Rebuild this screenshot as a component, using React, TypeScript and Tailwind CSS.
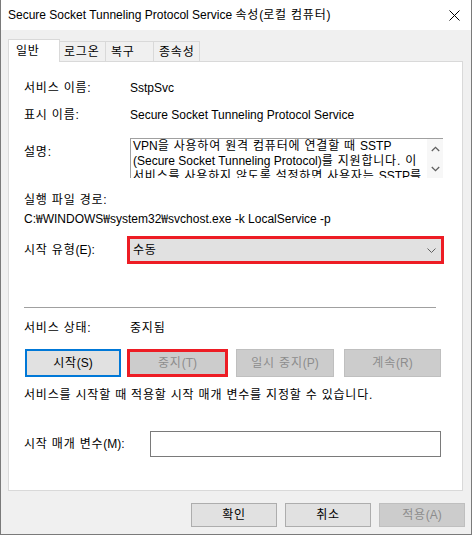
import type { ReactNode } from "react";

// Korean runs get a bit of tracking so they take the width of the original glyphs
function K({ children }: { children: ReactNode }) {
  return <span className="tracking-[0.8px]">{children}</span>;
}

function Won() {
  return <span className="font-['Noto_Sans_CJK_KR',sans-serif]">₩</span>;
}

const tabs = [
  { label: "로그온", w: "w-[46px]", pl: "pl-[4px]" },
  { label: "복구", w: "w-[48px]", pl: "pl-[5px]" },
  { label: "종속성", w: "w-[46px]", pl: "pl-[5px]" },
];

function Chevron({ up = false }: { up?: boolean }) {
  return (
    <svg width="9" height="6" viewBox="0 0 9 6" className="block">
      <path
        d={up ? "M0.8 5 L4.5 1.3 L8.2 5" : "M0.8 1 L4.5 4.7 L8.2 1"}
        fill="none"
        stroke="#606060"
        strokeWidth="1.3"
      />
    </svg>
  );
}

export default function App() {
  return (
    <div className="flex h-[535px] w-[472px] flex-col border-x border-b border-[#7a7a7a] bg-[#f0f0f0] font-['Liberation_Sans','Noto_Sans_CJK_KR',sans-serif] text-[12px] leading-4 text-black">
      {/* title bar */}
      <div className="flex h-[30px] shrink-0 items-center justify-between bg-white pl-[7px] pr-[11px]">
        <span className="whitespace-nowrap">
          Secure Socket Tunneling Protocol Service <K>속성</K>(<K>로컬 컴퓨터</K>)
        </span>
        <svg width="11" height="11" viewBox="0 0 11 11">
          <path d="M0.5 0.5 L10.5 10.5 M10.5 0.5 L0.5 10.5" stroke="#000" strokeWidth="1" />
        </svg>
      </div>

      <div className="ml-[7px] mr-[8px] mt-[9px]">
        {/* tabs */}
        <div className="relative z-10 flex h-[23px] items-start">
          <div className="flex h-[23px] w-[52px] items-center border-x border-t border-[#d9d9d9] bg-white pl-[7px]">
            <K>일반</K>
          </div>
          {tabs.map((t) => (
            <div
              key={t.label}
              className={`mt-[2px] flex h-[21px] ${t.w} ${t.pl} items-center border-y border-r border-[#d9d9d9] bg-[#f0f0f0]`}
            >
              <K>{t.label}</K>
            </div>
          ))}
        </div>

        {/* panel */}
        <div className="-mt-px flex h-[430px] flex-col border border-[#d9d9d9] bg-white px-[15px]">
          <div className="mt-[18px] flex h-4 items-center">
            <span className="w-[106px]">
              <K>서비스 이름</K>:
            </span>
            <span>SstpSvc</span>
          </div>
          <div className="mt-[11px] flex h-4 items-center">
            <span className="w-[106px]">
              <K>표시 이름</K>:
            </span>
            <span>Secure Socket Tunneling Protocol Service</span>
          </div>

          <div className="mt-[15px] flex h-[40px]">
            <span className="w-[106px] pt-[6px]">
              <K>설명</K>:
            </span>
            <div className="flex h-[40px] w-[313px] overflow-hidden border-l border-t border-[#a0a0a0] bg-white">
              <div className="flex-1 overflow-hidden pl-[2px] leading-[15px]">
                <div className="whitespace-nowrap">
                  VPN<K>을 사용하여 원격 컴퓨터에 연결할 때 </K>SSTP
                </div>
                <div className="whitespace-nowrap">
                  (Secure Socket Tunneling Protocol)<K>를 지원합니다. 이</K>
                </div>
                <div className="whitespace-nowrap">
                  <K>서비스를 사용하지 않도록 설정하면 사용자는 </K>SSTP<K>를</K>
                </div>
              </div>
              <div className="flex w-[16px] flex-col items-center gap-[14px] bg-[#f7f7f7] pt-[7px]">
                <Chevron up />
                <Chevron />
              </div>
            </div>
          </div>

          <div className="mt-[14px] h-4">
            <K>실행 파일 경로</K>:
          </div>
          <div className="mt-[2px] h-4 whitespace-nowrap">
            C:<Won />WINDOWS<Won />system32<Won />svchost.exe -k LocalService -p
          </div>

          <div className="mt-[10px] flex h-[28px] items-center">
            <span className="w-[103px]">
              <K>시작 유형</K>(E):
            </span>
            <div className="flex h-[28px] w-[317px] items-center justify-between border-[3px] border-[#ed1c24] bg-[#e1e1e1] pl-[3px] pr-[5px]">
              <K>수동</K>
              <svg width="9" height="5" viewBox="0 0 9 5">
                <path d="M0.5 0.5 L4.5 4.5 L8.5 0.5" fill="none" stroke="#606060" strokeWidth="1" />
              </svg>
            </div>
          </div>

          <div className="mt-[43px] h-px w-[412px] bg-[#a0a0a0]" />

          <div className="mt-[12px] flex h-4 items-center">
            <span className="w-[106px]">
              <K>서비스 상태</K>:
            </span>
            <K>중지됨</K>
          </div>

          <div className="mt-[13px] flex h-[28px] items-stretch">
            <button className="ml-[1px] w-[96px] border-2 border-[#0078d7] bg-[#e1e1e1]">
              <K>시작</K>(S)
            </button>
            <button className="ml-[6px] w-[101px] border-[3px] border-[#ed1c24] bg-[#cccccc] text-[#8c8c8c]">
              <K>중지</K>(T)
            </button>
            <button className="ml-[8px] w-[98px] border border-[#bfbfbf] bg-[#cccccc] text-[#8c8c8c]">
              <K>일시 중지</K>(P)
            </button>
            <button className="ml-[10px] w-[97px] border border-[#bfbfbf] bg-[#cccccc] text-[#8c8c8c]">
              <K>계속</K>(R)
            </button>
          </div>

          <div className="mt-[10px] h-4 whitespace-nowrap">
            <K>서비스를 시작할 때 적용할 시작 매개 변수를 지정할 수 있습니다</K>.
          </div>

          <div className="mt-[28px] flex h-[26px] items-center">
            <span className="w-[126px]">
              <K>시작 매개 변수</K>(M):
            </span>
            <div className="h-[26px] w-[291px] border border-[#7a7a7a] bg-white" />
          </div>
        </div>
      </div>

      {/* dialog buttons */}
      <div className="mt-[12px] flex justify-end gap-[8px] pr-[6px]">
        <button className="h-[24px] w-[86px] border border-[#adadad] bg-[#e1e1e1]">
          <K>확인</K>
        </button>
        <button className="h-[24px] w-[86px] border border-[#adadad] bg-[#e1e1e1]">
          <K>취소</K>
        </button>
        <button className="h-[24px] w-[86px] border border-[#bfbfbf] bg-[#cccccc] text-[#8c8c8c]">
          <K>적용</K>(A)
        </button>
      </div>
    </div>
  );
}
